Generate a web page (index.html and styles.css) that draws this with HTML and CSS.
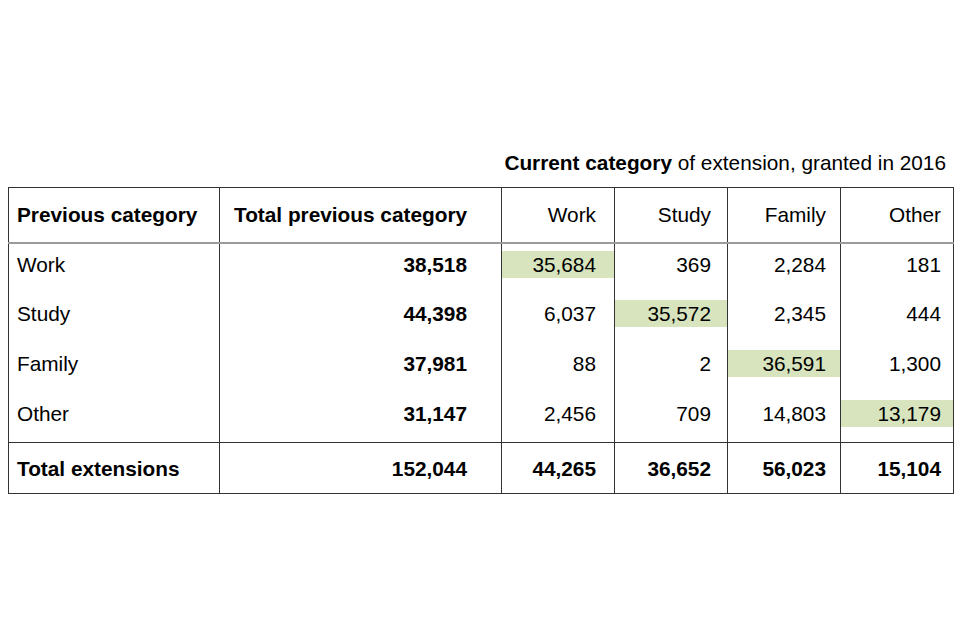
FILE: index.html
```html
<!DOCTYPE html>
<html lang="en">
<head>
<meta charset="utf-8">
<title>Current category of extension</title>
<link rel="stylesheet" href="styles.css">
</head>
<body>
<div class="wrap">
  <p class="caption"><strong>Current category</strong> of extension, granted in 2016</p>
  <table class="grid">
    <colgroup>
      <col class="c1"><col class="c2"><col class="cn"><col class="cn"><col class="cn"><col class="cn">
    </colgroup>
    <thead>
      <tr>
        <th class="lbl">Previous category</th>
        <th class="tot">Total previous category</th>
        <th class="n n3">Work</th>
        <th class="n n4">Study</th>
        <th class="n n5">Family</th>
        <th class="n n6">Other</th>
      </tr>
    </thead>
    <tbody>
      <tr>
        <td class="lbl"><div class="v">Work</div></td>
        <td><div class="v b p2">38,518</div></td>
        <td><div class="v n3 hl">35,684</div></td>
        <td><div class="v n4">369</div></td>
        <td><div class="v n5">2,284</div></td>
        <td><div class="v n6">181</div></td>
      </tr>
      <tr>
        <td class="lbl"><div class="v">Study</div></td>
        <td><div class="v b p2">44,398</div></td>
        <td><div class="v n3">6,037</div></td>
        <td><div class="v n4 hl">35,572</div></td>
        <td><div class="v n5">2,345</div></td>
        <td><div class="v n6">444</div></td>
      </tr>
      <tr>
        <td class="lbl"><div class="v">Family</div></td>
        <td><div class="v b p2">37,981</div></td>
        <td><div class="v n3">88</div></td>
        <td><div class="v n4">2</div></td>
        <td><div class="v n5 hl">36,591</div></td>
        <td><div class="v n6">1,300</div></td>
      </tr>
      <tr>
        <td class="lbl"><div class="v">Other</div></td>
        <td><div class="v b p2">31,147</div></td>
        <td><div class="v n3">2,456</div></td>
        <td><div class="v n4">709</div></td>
        <td><div class="v n5">14,803</div></td>
        <td><div class="v n6 hl">13,179</div></td>
      </tr>
    </tbody>
    <tfoot>
      <tr>
        <td class="lbl"><div class="v b">Total extensions</div></td>
        <td><div class="v b p2">152,044</div></td>
        <td><div class="v b n3">44,265</div></td>
        <td><div class="v b n4">36,652</div></td>
        <td><div class="v b n5">56,023</div></td>
        <td><div class="v b n6">15,104</div></td>
      </tr>
    </tfoot>
  </table>
</div>
</body>
</html>
```

FILE: styles.css
```css
html, body {
  margin: 0;
  padding: 0;
  background: #ffffff;
}

body {
  font-family: "Liberation Sans", Arial, sans-serif;
  font-size: 20.8px;
  color: #000000;
}

.wrap {
  padding: 150px 7px 0 8px;
}

.caption {
  margin: 0 7px 11px 0;
  height: 26px;
  line-height: 26px;
  text-align: right;
  white-space: nowrap;
}

.caption strong {
  font-weight: bold;
}

.grid {
  width: 945px;
  border-collapse: collapse;
  table-layout: fixed;
  border: 1px solid #333333;
}

.c1 { width: 211px; }
.c2 { width: 282px; }
.cn { width: 113px; }

.grid th,
.grid td {
  border-left: 1px solid #333333;
  border-right: 1px solid #333333;
  padding: 0;
  white-space: nowrap;
}

.grid thead tr {
  height: 55px;
}

.grid th {
  font-weight: bold;
  text-align: left;
  vertical-align: middle;
  border-bottom: 2px solid #9a9a9a;
}

.grid th.lbl {
  padding-left: 8px;
}

.grid th.tot {
  padding-left: 14px;
}

.grid th.n {
  font-weight: normal;
  text-align: right;
}

.grid tbody tr {
  height: 50px;
}

.grid td {
  vertical-align: top;
  padding-top: 7px;
}

.grid tfoot tr {
  height: 51px;
}

.grid tfoot td {
  border-top: 1px solid #333333;
  vertical-align: middle;
  padding-top: 0;
}

.v {
  height: 27px;
  line-height: 27px;
  text-align: right;
}

.lbl .v {
  text-align: left;
  padding-left: 8px;
}

.b {
  font-weight: bold;
}

.grid .p2 { padding-right: 34px; }
.grid .n3 { padding-right: 18px; }
.grid .n4 { padding-right: 16px; }
.grid .n5 { padding-right: 14px; }
.grid .n6 { padding-right: 12px; }

.hl {
  background: #d7e4bd;
}
```
